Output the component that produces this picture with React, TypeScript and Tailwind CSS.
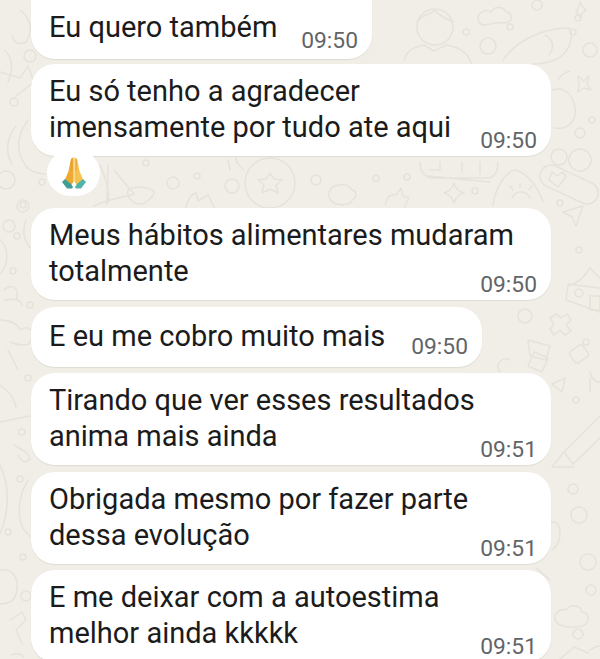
const MESSAGES = [
  { lines: ['Eu só tenho a agradecer', 'imensamente por tudo ate aqui'], time: '09:50', width: 'w-[520px]', reaction: true },
  { lines: ['Meus hábitos alimentares mudaram', 'totalmente'], time: '09:50', width: 'w-[520px]' },
  { lines: ['E eu me cobro muito mais'], time: '09:50', width: 'w-[451px]', single: true },
  { lines: ['Tirando que ver esses resultados', 'anima mais ainda'], time: '09:51', width: 'w-[520px]' },
  { lines: ['Obrigada mesmo por fazer parte', 'dessa evolução'], time: '09:51', width: 'w-[520px]' },
  { lines: ['E me deixar com a autoestima', 'melhor ainda kkkkk'], time: '09:51', width: 'w-[520px]' },
]

function Wallpaper() {
  return (
    <svg className="absolute inset-0" width="600" height="659" viewBox="0 0 600 659" fill="none" stroke="#e5e2da" strokeWidth="1.5" strokeLinecap="round" strokeLinejoin="round">
      {/* person */}
      <circle cx="435" cy="27" r="18" />
      <path d="M417 22c5-8 12-6 18-12 4 6 10 8 18 12M404 60c3-10 10-13 20-15l10 6 12-6c14 2 22 8 25 18" />
      {/* cloud, fish */}
      <path d="M479 22c-4-8 6-14 12-10 3-6 13-6 15 0 6 0 7 8 2 10-6 2-10 0-14 1-5 2-12 4-15-1z" />
      <path d="M503 60c14-20 40-32 66-32 6 8 0 26-14 32-10 4-16 4-22 4" />
      <path d="M545 35c8 4 10 12 4 20" />
      <circle cx="488" cy="46" r="8" /><circle cx="466" cy="32" r="3" /><circle cx="510" cy="27" r="3" />
      <circle cx="537" cy="5" r="5" /><circle cx="573" cy="32" r="3" /><circle cx="578" cy="18" r="3" />
      <path d="M578 76l6 5 5-5-2 8 4 6-7-2-6 4 1-8z" />
      <path d="M576 12c2-4 3-4 4-10 2 5 3 6 6 8-3 2-5 3-6 8-1-3-2-5-4-6z" />
      <circle cx="590" cy="50" r="7" />
      {/* right column */}
      <path d="M553 90c8-4 20 2 22 18 2 14-8 22-20 20" />
      <path d="M558 80c3-6 8-8 12-9" /><circle cx="592" cy="120" r="3" /><circle cx="580" cy="133" r="5" />
      <circle cx="559" cy="157" r="8" /><circle cx="580" cy="160" r="11" />
      <rect x="538" y="174" width="62" height="22" rx="11" transform="rotate(25 570 185)" />
      <path d="M552 172l5 4 6-4 3 5-8 10-9-7z" />
      <path d="M563 212l20-6-7 20-4-9z" /><circle cx="560" cy="203" r="3" /><circle cx="579" cy="250" r="3" />
      <path d="M566 300l2-14c8-2 16-8 22-18 3 4 6 6 10 10M566 300l34 12M600 288l-32-4" />
      <circle cx="579" cy="293" r="4" /><rect x="590" y="296" width="10" height="14" />
      <circle cx="525" cy="316" r="7" />
      <path d="M550 318l7-4 4 4 6-4 4 6-5 5 5 6-6 4-5-5-6 5-4-6 4-5z" />
      <rect x="571" y="347" width="16" height="14" rx="3" transform="rotate(-35 579 354)" /><circle cx="586" cy="342" r="3" />
      <path d="M528 340l22 6-4 14-16-4zM534 352l14 6-6 14-14-6z" />
      <path d="M500 372c-6-8 2-16 10-12M565 378l-13 6 10 8z" /><path d="M590 372c2 8 6 10 10 10M590 378v14" />
      <circle cx="576" cy="400" r="3" />
      {/* pencil */}
      <path d="M552 467l12-15 40-40M564 452l9 12 27-26M552 467h22" />
      <circle cx="573" cy="489" r="5" /><circle cx="579" cy="515" r="8" /><circle cx="588" cy="562" r="8" /><circle cx="591" cy="590" r="5" />
      <circle cx="578" cy="634" r="5" />
      <path d="M556 622c-4-8 4-14 10-12 4-6 14-6 16 2 8 0 8 12 0 14-8 2-20 2-26-4z" />
      <path d="M552 550c8-6 10-16 6-26-4-4-12-2-16 2M550 580c-6-4-12-12-14-12" />
      <path d="M560 659l14-12 14 6M590 650c6-4 8-4 10-4" />
      {/* left column */}
      <path d="M20 10c10 8 14 20 6 32-8 4-12 0-14-6M4 50c8 6 10 18 4 32M0 72l20 6 8-12 6 16-18 14" />
      <circle cx="14" cy="102" r="4" /><circle cx="30" cy="56" r="6" />
      <path d="M16 126c-8 10-12 24-4 38M28 120c-10 14-14 30-2 46 4 6 14 8 20 8" />
      <circle cx="6" cy="180" r="9" /><circle cx="23" cy="206" r="6" />
      <circle cx="9" cy="226" r="6" /><circle cx="17" cy="236" r="3" /><circle cx="13" cy="271" r="3" />
      <path d="M0 240c8 6 10 24 0 34M26 220c-4 10-2 20 4 28" />
      <path d="M4 290c10-8 16 0 12 10M4 300c4 0 16-4 18 6" /><circle cx="30" cy="305" r="3" />
      <path d="M0 320c10 0 18 4 20 10 10-6 16 2 10 12 0 4-12 4-20 0M8 350l10 20" />
      <circle cx="28" cy="378" r="3" />
      <path d="M0 385c10 8 14 12 16 22M0 422l30-6" />
      <circle cx="22" cy="432" r="3" />
      <path d="M14 445c6 4 14 6 16 14-4 4-8 4-12-4" />
      <path d="M0 465c10 20 10 50-2 72M28 480c-12 20-12 46 2 56" /><circle cx="20" cy="479" r="3" />
      <circle cx="8" cy="532" r="3" /><circle cx="23" cy="557" r="3" />
      <path d="M0 570c14-2 20 10 16 24-2 8-10 10-16 10M10 620l12-8 4 8-10 10 6 14" />
      <circle cx="26" cy="596" r="5" /><path d="M12 655c4-2 8-2 12 2" />
      {/* gaps */}
      <circle cx="146" cy="163" r="3" /><circle cx="173" cy="183" r="6" /><circle cx="197" cy="176" r="3" />
      <circle cx="232" cy="186" r="7" /><circle cx="23" cy="205" r="3" /><circle cx="42" cy="182" r="3" />
      <circle cx="270" cy="183" r="25" /><path d="M270 173l4 6 8 1-6 5 2 8-8-4-8 4 2-8-6-5 8-1z" />
      <path d="M100 165c6 14 10 26 8 38M108 165c0 10 0 30-2 40M114 170l20 24c-14 4-28 6-40 12" />
      <path d="M128 190c4-4 22-4 26 2 0 4-8 12-14 12-8 0-14-8-12-14zM186 207c2-8 6-14 10-14l2 8 10-6 6 12" />
      <path d="M228 160l2 10M236 158c0 6 4 8 8 12" />
      <path d="M420 162c0 10 4 14 10 16h60c6-2 8-8 8-16M430 170h10v-8M462 162v10M480 162v12M428 176l62 6" />
      <circle cx="316" cy="180" r="5" /><circle cx="376" cy="178" r="3" /><circle cx="407" cy="177" r="3" /><circle cx="475" cy="191" r="3" />
      <path d="M330 190c4-6 18-8 22 0 4 0 6 8 0 10 0 4-10 6-14 4-6 0-12-8-8-14z" />
      <path d="M385 204l4-8 8-2 4-6 2 8 6 2-4 8v6" />
      <path d="M444 193c6-2 8-4 10-10 2 6 4 8 10 10-6 2-8 4-10 10-2-6-4-8-10-10z" />
      <path d="M493 206c2-18 12-34 22-36 10 2 22 14 28 32" />
      <path d="M512 198c4-8 14-8 18 0M510 186l3 4M520 184v4M532 186l-3 4" />
    </svg>
  )
}

function PrayingHands() {
  return (
    <svg width="26" height="32" viewBox="0 0 26 32">
      <path d="M12.600 0.500c-1.800 0-2.500 1-3 2.800L7.500 14 4 22.500l-1.500 3 6 5 4.100-6z" fill="#efaa32" />
      <path d="M13.400 0.500c1.800 0 2.500 1 3 2.800L18.500 14 22 22.500l1.500 3-6 5-4.100-6z" fill="#f8c24f" />
      <path d="M10.800 2v12M15.200 2v12" stroke="#dd9526" strokeWidth="0.600" fill="none" />
      <path d="M1 25l3-3 6 5 2 3-1 1.500H6z" fill="#3f9e96" />
      <path d="M25 25l-3-3-6 5-2 3 1 1.500h5z" fill="#52b3a8" />
    </svg>
  )
}

function Bubble({ lines, time, width, reaction, single }: { lines: string[]; time: string; width: string; reaction?: boolean; single?: boolean }) {
  return (
    <div className={`relative ${width} ml-[31px] rounded-[24px] bg-white pl-[18px] pr-[14px] shadow-[0_1px_1px_rgba(0,0,0,0.08)] ${single ? 'pt-[11px] pb-[13px]' : 'pt-[9px] pb-[11px]'}`}>
      <div className="flex items-end justify-between">
        <div className="w-0 flex-1 whitespace-nowrap text-[29px] leading-[36px] text-[#1b1b1b]">
          {lines.map(line => <p key={line}>{line}</p>)}
        </div>
        <span className={`text-[22.8px] leading-[26px] text-[#626568] ${single ? 'mb-[-6px]' : 'mb-[-9px]'}`}>{time}</span>
      </div>
      {reaction && (
        <div className="absolute left-[16px] top-[86px] flex h-[46px] w-[53px] items-center justify-center rounded-full bg-white">
          <PrayingHands />
        </div>
      )}
    </div>
  )
}

export default function App() {
  return (
    <div className="relative h-[659px] w-[600px] overflow-hidden bg-[#f1eee7] font-['Roboto',sans-serif]">
      <Wallpaper />
      <div className="relative flex flex-col">
        <div className="ml-[31px] flex h-[59px] w-[341px] items-start justify-between rounded-b-[24px] bg-white pl-[18px] pr-[14px] shadow-[0_1px_1px_rgba(0,0,0,0.08)]">
          <p className="mt-[9px] text-[29px] leading-[36px] text-[#1b1b1b]">Eu quero também</p>
          <span className="mt-[28px] text-[22.8px] leading-[26px] text-[#626568]">09:50</span>
        </div>
        <div className="mt-[5px] flex flex-col">
          <div className="mb-[52px]"><Bubble {...MESSAGES[0]} /></div>
          <div className="mb-[7px]"><Bubble {...MESSAGES[1]} /></div>
          <div className="mb-[6px]"><Bubble {...MESSAGES[2]} /></div>
          <div className="mb-[7px]"><Bubble {...MESSAGES[3]} /></div>
          <div className="mb-[6px]"><Bubble {...MESSAGES[4]} /></div>
          <Bubble {...MESSAGES[5]} />
        </div>
      </div>
    </div>
  )
}
